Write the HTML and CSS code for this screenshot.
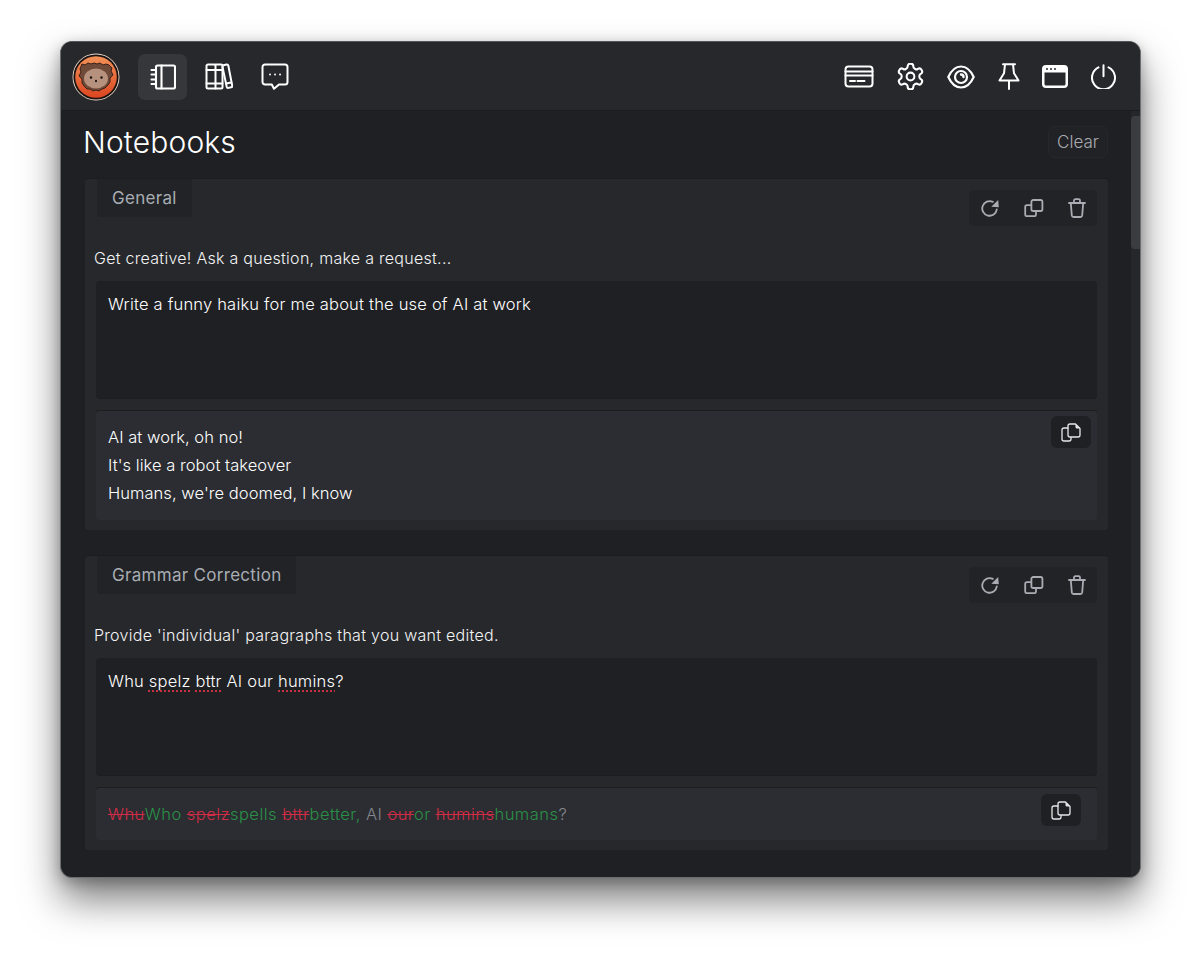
FILE: index.html
```html
<!DOCTYPE html>
<html lang="en">
<head>
<meta charset="utf-8">
<title>Notebooks</title>
<link rel="stylesheet" href="styles.css">
</head>
<body>
<svg class="sprites" width="0" height="0" aria-hidden="true">
  <symbol id="i-refresh" viewBox="0 0 18 18"><path d="M15.800 10.400A7.300 7.300 0 1 1 11.800 2.900" fill="none" stroke="currentColor" stroke-width="1.800" stroke-linecap="round"/><path d="M10.300 7.800 17.200.9 17.800 8.300z" fill="currentColor"/></symbol>
  <symbol id="i-dup" viewBox="0 0 20 18"><rect x="7.400" y="1" width="11" height="11" rx="1.800" fill="none" stroke="currentColor" stroke-width="1.800"/><path d="M7.400 6.200H3a1.800 1.800 0 0 0-1.800 1.800v7.400A1.800 1.800 0 0 0 3 17.200h7.200a1.800 1.800 0 0 0 1.800-1.800V12" fill="none" stroke="currentColor" stroke-width="1.800"/></symbol>
  <symbol id="i-trash" viewBox="0 0 18 20"><path d="M1 5h16M6 5V2.600A1.400 1.400 0 0 1 7.400 1.200h3.200A1.400 1.400 0 0 1 12 2.600V5M2.800 5l1 12.400A1.800 1.800 0 0 0 5.600 19h6.800a1.800 1.800 0 0 0 1.800-1.600L15.200 5" fill="none" stroke="currentColor" stroke-width="1.800" stroke-linejoin="round" stroke-linecap="round"/></symbol>
  <symbol id="i-copy" viewBox="0 0 20 19"><path d="M7.500 5H3a2 2 0 0 0-2 2v9a2 2 0 0 0 2 2h5a2 2 0 0 0 2-2v-2" fill="none" stroke="currentColor" stroke-width="1.300"/><path d="M9 1h5.500L19 5.500V12a2 2 0 0 1-2 2H9a2 2 0 0 1-2-2V3a2 2 0 0 1 2-2z" fill="none" stroke="currentColor" stroke-width="1.300" stroke-linejoin="round"/><path d="M14.500 1v3a1.500 1.500 0 0 0 1.500 1.500h3z" fill="currentColor"/></symbol>
</svg>

<div class="window">
  <header class="topbar">
    <div class="topbar-left">
      <svg class="avatar" viewBox="0 0 48 48" width="48" height="48" role="img" aria-label="avatar">
        <defs>
          <linearGradient id="av" x1="0" y1="0" x2="0" y2="1">
            <stop offset="0" stop-color="#f29257"/><stop offset="1" stop-color="#dc4520"/>
          </linearGradient>
        </defs>
        <circle cx="24" cy="24" r="23.500" fill="#e9d6c8"/>
        <circle cx="24" cy="24" r="22.600" fill="#1b1210"/>
        <circle cx="24" cy="24" r="20.800" fill="url(#av)"/>
        <path d="M10 11l3 1 3-2 3 1 3-1 3 1 3-1 3 2 3-1 3 1 3 3-1 3 2 4-3 3 0 4-2 3-3 3-3 1-3 2-3-1-3 1-3-2-3 0-3-3-2-3 0-4-3-3 2-4-1-3z" fill="#6f4a39" stroke="#3a221a" stroke-width="1"/>
        <ellipse cx="24" cy="25.500" rx="12" ry="10" fill="#b5917e"/>
        <circle cx="19" cy="24.500" r="1.200" fill="#1d1210"/>
        <circle cx="29.500" cy="24.500" r="1.200" fill="#1d1210"/>
        <ellipse cx="24" cy="28" rx="1" ry="1.200" fill="#1d1210"/>
      </svg>
      <nav class="nav">
        <a class="nav-btn is-active" aria-label="Notebooks">
          <svg width="26" height="26" viewBox="0 0 26 26" fill="none" stroke="#fff" stroke-width="2.100" stroke-linecap="round" stroke-linejoin="round"><rect x="6" y="1.500" width="19" height="23" rx="1.500"/><path d="M11.500 1.500v23M1.500 6H6M1.500 10.500H6M1.500 15.500H6M1.500 20H6"/></svg>
        </a>
        <a class="nav-btn" aria-label="Library">
          <svg width="28" height="27" viewBox="0 0 28 27" fill="none" stroke="#fff" stroke-width="2" stroke-linecap="round" stroke-linejoin="round"><path d="M3 1.500h6a1.500 1.500 0 0 1 1.500 1.500v22.500H3A1.500 1.500 0 0 1 1.500 24V3A1.500 1.500 0 0 1 3 1.500z"/><path d="M10.500 1.500H16a1.500 1.500 0 0 1 1.500 1.500v21a1.500 1.500 0 0 1-1.500 1.500h-5.500"/><path d="M1.500 7h16M1.500 20.500h16"/><path d="M18.500 2.200l3-.7a1.500 1.500 0 0 1 1.800 1l3.900 20a1.500 1.500 0 0 1-1.100 1.800l-2.600.6a1.500 1.500 0 0 1-1.800-1.100L17.500 4"/><path d="M21.300 20.500l5-1.100"/></svg>
        </a>
        <a class="nav-btn" aria-label="Chat">
          <svg width="28" height="27" viewBox="0 0 28 27" fill="none" stroke="#fff" stroke-width="2" stroke-linecap="round" stroke-linejoin="round"><path d="M4 1.500h20A2.500 2.500 0 0 1 26.500 4v15a2.500 2.500 0 0 1-2.500 2.500h-6l-5 4.300-2.200-4.300H4A2.500 2.500 0 0 1 1.500 19V4A2.500 2.500 0 0 1 4 1.500z"/><path d="M9 11.500h.1M14 11.500h.1M19 11.500h.1" stroke-width="1.800"/></svg>
        </a>
      </nav>
    </div>
    <div class="topbar-right">
      <svg width="30" height="23" viewBox="0 0 30 23" fill="none" stroke="#fff" stroke-width="2" stroke-linecap="round" stroke-linejoin="round"><rect x="1.500" y="1.500" width="27" height="20" rx="3"/><path d="M1.500 6.500h27M1.500 10.500h27M6 16h5M13.500 16h7"/></svg>
      <svg width="27" height="27" viewBox="2 1.500 20 21" fill="none" stroke="#fff" stroke-width="1.600" stroke-linecap="round" stroke-linejoin="round"><path d="M12.220 2h-.44a2 2 0 0 0-2 2v.18a2 2 0 0 1-1 1.730l-.43.25a2 2 0 0 1-2 0l-.15-.08a2 2 0 0 0-2.730.73l-.22.38a2 2 0 0 0 .73 2.730l.15.1a2 2 0 0 1 1 1.720v.51a2 2 0 0 1-1 1.740l-.15.09a2 2 0 0 0-.73 2.730l.22.38a2 2 0 0 0 2.730.73l.15-.08a2 2 0 0 1 2 0l.43.25a2 2 0 0 1 1 1.730V20a2 2 0 0 0 2 2h.44a2 2 0 0 0 2-2v-.18a2 2 0 0 1 1-1.730l.43-.25a2 2 0 0 1 2 0l.15.08a2 2 0 0 0 2.730-.73l.22-.39a2 2 0 0 0-.73-2.730l-.15-.08a2 2 0 0 1-1-1.740v-.5a2 2 0 0 1 1-1.740l.15-.09a2 2 0 0 0 .73-2.730l-.22-.38a2 2 0 0 0-2.730-.73l-.15.08a2 2 0 0 1-2 0l-.43-.25a2 2 0 0 1-1-1.730V4a2 2 0 0 0-2-2z"/><circle cx="12" cy="12" r="3"/></svg>
      <svg width="28" height="24" viewBox="0 0 28 24" fill="none" stroke="#fff" stroke-width="2.200" stroke-linecap="round" stroke-linejoin="round"><path d="M1.300 12C4.500 5 9 1.500 14 1.500S23.500 5 26.700 12C23.500 19 19 22.500 14 22.500S4.500 19 1.300 12z"/><circle cx="14" cy="12" r="6"/><path d="M14 9.500a2.500 2.500 0 0 1 2.500 2.500" stroke-width="2.400"/></svg>
      <svg class="icon-pin" width="22" height="27" viewBox="0 0 22 27" fill="none" stroke="#fff" stroke-width="2" stroke-linecap="round" stroke-linejoin="round"><path d="M5 1.300h12M7 1.300l-1 9L1.500 17.500h19L16 10.300l-1-9M11 17.500v8.500"/></svg>
      <svg width="26" height="23" viewBox="0 0 26 23"><path fill-rule="evenodd" d="M4 0h18a4 4 0 0 1 4 4v15a4 4 0 0 1-4 4H4a4 4 0 0 1-4-4V4a4 4 0 0 1 4-4zM2.500 7.500V19A1.500 1.500 0 0 0 4 20.500h18a1.500 1.500 0 0 0 1.500-1.500V7.500z" fill="#fff"/><circle cx="5" cy="4" r="1" fill="#26282c"/><circle cx="9" cy="4" r="1" fill="#26282c"/><circle cx="13" cy="4" r="1" fill="#26282c"/></svg>
      <svg width="25" height="25" viewBox="0.500 0 25 25" fill="none" stroke="#fff" stroke-width="2" stroke-linecap="round"><path d="M8 3.400a11.500 11.500 0 1 0 10 0M13 1.200v11"/></svg>
    </div>
  </header>

  <div class="body">
    <main class="content">
      <div class="title-row">
        <h1 class="title">Notebooks</h1>
        <button class="clear-btn">Clear</button>
      </div>

      <section class="card">
        <div class="card-head">
          <div class="tab">General</div>
          <div class="tools">
            <svg class="tool-refresh"><use href="#i-refresh"/></svg>
            <svg class="tool-dup"><use href="#i-dup"/></svg>
            <svg class="tool-trash"><use href="#i-trash"/></svg>
          </div>
        </div>
        <p class="label">Get creative! Ask a question, make a request...</p>
        <div class="input">Write a funny haiku for me about the use of AI at work</div>
        <div class="output">
          <button class="copy-btn copy-tall"><svg class="copy-icon"><use href="#i-copy"/></svg></button>
          <div>AI at work, oh no!</div>
          <div>It's like a robot takeover</div>
          <div>Humans, we're doomed, I know</div>
        </div>
      </section>

      <section class="card">
        <div class="card-head">
          <div class="tab">Grammar Correction</div>
          <div class="tools">
            <svg class="tool-refresh"><use href="#i-refresh"/></svg>
            <svg class="tool-dup"><use href="#i-dup"/></svg>
            <svg class="tool-trash"><use href="#i-trash"/></svg>
          </div>
        </div>
        <p class="label">Provide 'individual' paragraphs that you want edited.</p>
        <div class="input">Whu <span class="typo">spelz</span> <span class="typo">bttr</span> AI our <span class="typo">humins</span>?</div>
        <div class="output output-diff">
          <div class="diff"><del>Whu</del><ins>Who</ins> <del>spelz</del><ins>spells</ins> <del>bttr</del><ins>better,</ins> AI <del>our</del><ins>or</ins> <del>humins</del><ins>humans</ins>?</div>
          <button class="copy-btn copy-short"><svg class="copy-icon"><use href="#i-copy"/></svg></button>
        </div>
      </section>
    </main>
    <div class="scrolltrack"><div class="scrollthumb"></div></div>
  </div>
</div>
</body>
</html>
```

FILE: styles.css
```css
* { box-sizing: border-box; }
html, body { height: 100%; }
body {
  margin: 0;
  padding: 41px 59px 78px 60px;
  background: #fff;
  font-family: Inter, "Liberation Sans", sans-serif;
  color: #f2f2f2;
  overflow: hidden;
}
.sprites { position: absolute; }

.window {
  height: 837px;
  display: flex;
  flex-direction: column;
  background: #1f2024;
  border: 1px solid #6d6e70;
  border-top-color: #55565a;
  border-radius: 12px;
  overflow: hidden;
  box-shadow: 0 22px 38px rgba(0, 0, 0, .5), 0 4px 14px rgba(0, 0, 0, .25);
}

.topbar {
  flex: none;
  height: 69px;
  display: flex;
  align-items: center;
  justify-content: space-between;
  padding: 1px 24px 0 11px;
  background: #26282c;
  border-bottom: 1px solid #1c1d20;
}
.topbar-left { display: flex; align-items: center; gap: 18px; }
.avatar { display: block; }
.nav { display: flex; gap: 7px; }
.nav-btn {
  width: 49px;
  height: 46px;
  border-radius: 7px;
  display: flex;
  align-items: center;
  justify-content: center;
}
.nav-btn.is-active { background: #35373b; }
.topbar-right { display: flex; align-items: center; gap: 23px; }
.icon-pin { margin-right: -1px; }

.body { flex: 1; min-height: 0; display: flex; }
.content {
  flex: 1;
  min-width: 0;
  overflow: hidden;
  padding: 0 23px 0 23px;
}
.scrolltrack {
  flex: none;
  width: 9px;
  background: #26272b;
  padding-top: 5px;
}
.scrollthumb { height: 133px; background: #3b3c40; border-radius: 4px 0 0 4px; }

.title-row {
  height: 61px;
  margin-bottom: 7px;
  display: flex;
  align-items: center;
  justify-content: space-between;
}
.title {
  margin: 0 0 0 -1px;
  font-size: 30px;
  font-weight: 300;
  letter-spacing: .15px;
  color: #fff;
}
.clear-btn {
  width: 60px;
  height: 32px;
  padding: 0;
  border: 1px solid #26272b;
  border-radius: 6px;
  background: #212226;
  color: #a9abb0;
  font: 300 17px Inter, "Liberation Sans", sans-serif;
}

.card {
  margin: 0 0 26px 1px;
  padding: 0 10px 10px;
  background: #26282c;
  border-radius: 3px;
  box-shadow: 0 -1px 0 #1b1c1f;
}
.card-head {
  height: 47px;
  display: flex;
  align-items: flex-start;
  justify-content: space-between;
  padding: 0 1px 0 2px;
}
.tab {
  height: 38px;
  padding: 0 15px;
  display: flex;
  align-items: center;
  background: #212327;
  border-radius: 0 0 3px 3px;
  color: #a9adb3;
  font-size: 17px;
  font-weight: 400;
  letter-spacing: .3px;
}
.tools {
  margin-top: 11px;
  width: 128px;
  height: 36px;
  display: flex;
  align-items: center;
  gap: 25px;
  padding-left: 12px;
  background: #212327;
  border-radius: 5px;
  color: #a9adb3;
}
.tool-refresh { width: 18px; height: 18px; }
.tool-dup { width: 20px; height: 18px; }
.tool-trash { width: 18px; height: 20px; margin-left: -1px; }

.label {
  margin: 20px 0 11px -1px;
  font-size: 16px;
  letter-spacing: .28px;
  line-height: 24px;
  font-weight: 300;
  color: #f4f4f4;
}
.input {
  margin: 0 1px;
  height: 117px;
  padding: 9px 12px;
  background: #1f2024;
  border-radius: 4px;
  box-shadow: 0 1px 0 #1c1d20;
  font-size: 16.500px;
  letter-spacing: .2px;
  line-height: 28px;
  font-weight: 300;
  color: #fff;
}
.typo {
  text-decoration: underline dotted #c8303f 2px;
  text-underline-offset: 3px;
}
.output {
  position: relative;
  margin: 13px 1px 0;
  padding: 12px 12px 13px;
  background: #2b2d32;
  border-radius: 3px;
  box-shadow: 0 -1px 0 #1c1d20;
  font-size: 16.500px;
  letter-spacing: .05px;
  line-height: 28px;
  font-weight: 300;
  color: #fff;
}
.output-diff { padding-bottom: 12px; letter-spacing: .47px; }
.diff { color: #85878c; }
.diff del { color: #d02c45; text-decoration: line-through; }
.diff ins { color: #2a9147; text-decoration: none; }
.copy-btn {
  position: absolute;
  width: 40px;
  height: 32px;
  padding: 0;
  border: 0;
  border-radius: 6px;
  background: #1f2024;
  color: #e6e6e6;
  display: flex;
  align-items: center;
  justify-content: center;
}
.copy-tall { top: 5px; right: 6px; }
.copy-short { top: 6px; right: 16px; }
.copy-icon { width: 20px; height: 19px; }
```
